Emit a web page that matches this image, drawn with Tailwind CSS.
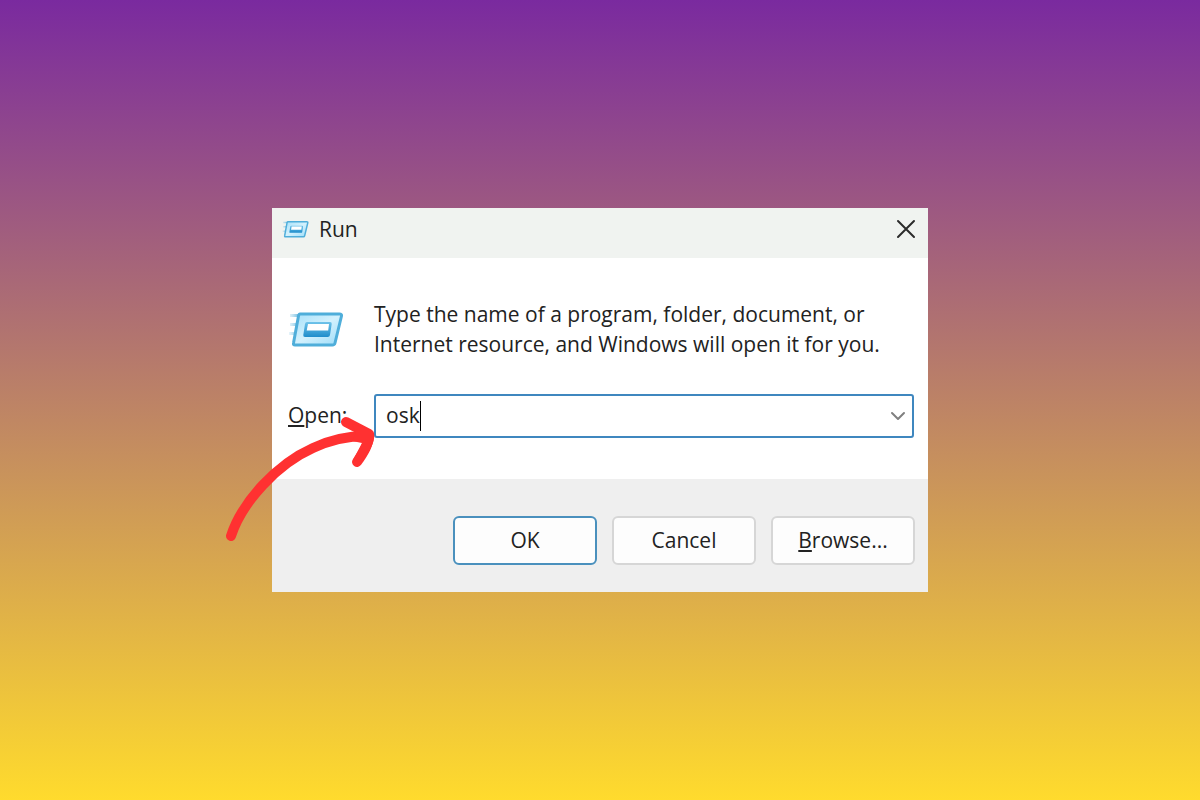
<!DOCTYPE html>
<html lang="en">
<head>
  <meta charset="UTF-8" />
  <meta name="viewport" content="width=device-width, initial-scale=1.0"/>
  <title>Run</title>
  <script src="https://cdn.jsdelivr.net/npm/@tailwindcss/browser@4"></script>
</head>
<body class="min-h-screen flex items-center justify-center bg-linear-to-b/srgb from-[#7a2a9f] to-[#ffdb2d] font-['Open_Sans',sans-serif] text-[21px] text-[#222222]">

  <!-- Shared icon -->
  <svg class="absolute size-0" aria-hidden="true">
    <defs>
      <linearGradient id="plate" x1="0" y1="0" x2="1" y2="1">
        <stop offset="0" stop-color="#a6e0fa" />
        <stop offset="0.5" stop-color="#d3f1fd" />
        <stop offset="1" stop-color="#9cdcf9" />
      </linearGradient>
      <linearGradient id="speed" x1="0" y1="0" x2="1" y2="0">
        <stop offset="0" stop-color="#8ccbe8" stop-opacity="0.2" />
        <stop offset="1" stop-color="#62b4dc" />
      </linearGradient>
      <linearGradient id="slot" x1="0" y1="0" x2="0" y2="1">
        <stop offset="0" stop-color="#6fc3ea" />
        <stop offset="1" stop-color="#1f8dcb" />
      </linearGradient>
    </defs>
    <symbol id="runIcon" viewBox="0 0 56 36">
      <path d="M2 3h10v3H2zM2 12h8v3H2zM1 21h7v3H1z" fill="url(#speed)" />
      <path d="M12 3H51.500Q54 3 53.500 5L47 32Q46.500 34 44.500 34H7Q5 34 5.500 32L10.500 5Q11 3 12 3Z" fill="url(#plate)" stroke="#4faeda" stroke-width="3" stroke-linejoin="round" />
      <path d="M19 11H42Q44 11 43.700 13L42 24Q41.700 26 39.700 26H17Q15 26 15.300 24L17 13Q17.300 11 19 11Z" fill="url(#slot)" />
      <path d="M20 13H41L40.200 19.500H18.700Z" fill="#ffffff" />
    </symbol>
  </svg>

  <main class="relative w-full max-w-[656px] bg-white">
    <header class="flex items-center justify-between bg-[#f0f3f0] pl-[10px] pr-3 pt-1 pb-3">
      <div class="flex items-center gap-[10px]">
        <svg class="w-[27px] h-[18px]" aria-hidden="true"><use href="#runIcon" /></svg>
        <h1 class="leading-[34px]">Run</h1>
      </div>
      <button type="button" aria-label="Close">
        <svg class="size-5" viewBox="0 0 20 20" fill="none" stroke="#2b2b2b" stroke-width="2" stroke-linecap="round">
          <path d="M2 2L18 18M18 2L2 18" />
        </svg>
      </button>
    </header>

    <form id="runForm">
      <div class="grid grid-cols-[86px_1fr] items-center gap-y-[35px] pl-4 pr-[14px] pt-[41px] pb-[41px]">
        <svg class="w-[56px] h-[36px]" aria-hidden="true"><use href="#runIcon" /></svg>
        <p class="leading-[30px] max-w-[520px]">Type the name of a program, folder, document, or Internet resource, and Windows will open it for you.</p>

        <label for="command"><span class="underline underline-offset-2">O</span>pen:</label>
        <div class="flex items-center h-11 rounded-[3px] border-2 border-[#3f87bf] pl-[10px] pr-[6px]">
          <input id="command" type="text" value="osk" class="field-sizing-content min-w-0 outline-none" />
          <span class="w-px h-[30px] bg-black"></span>
          <button type="button" aria-label="Show recent commands" class="ml-auto">
            <svg class="w-4 h-4" viewBox="0 0 16 16" fill="none" stroke="#808080" stroke-width="2" stroke-linecap="round" stroke-linejoin="round">
              <path d="M2 5L8 11L14 5" />
            </svg>
          </button>
        </div>
      </div>

      <footer class="flex justify-end gap-[15px] bg-[#efefef] pl-4 pr-[13px] pt-[37px] pb-[27px]">
        <button type="submit" class="w-36 h-[49px] rounded-md border-2 border-[#4a90bd] bg-[#fdfdfd]">OK</button>
        <button type="button" class="w-36 h-[49px] rounded-md border-2 border-[#d6d6d6] bg-[#fdfdfd]">Cancel</button>
        <button type="button" class="w-36 h-[49px] rounded-md border-2 border-[#d6d6d6] bg-[#fdfdfd]"><span class="underline underline-offset-2">B</span>rowse...</button>
      </footer>
    </form>

    <!-- Arrow pointing at the text box -->
    <svg class="absolute -left-[52px] top-[202px] w-[160px] h-[140px] pointer-events-none" viewBox="0 0 160 140" fill="none" stroke="#ff3131" stroke-width="10" stroke-linecap="round" stroke-linejoin="round" aria-hidden="true">
      <path d="M11 126C22 92 57 54 93 38C110 30 126 26 146 26" />
      <path d="M126 12L149 24C149 34 144 42 137 52" />
      <path d="M132 14C140 17 150 18 154 23C156 32 148 44 141 52L133 50L142 33L132 31L136 23Z" fill="#ff3131" stroke="none" />
    </svg>
  </main>

</body>
</html>
